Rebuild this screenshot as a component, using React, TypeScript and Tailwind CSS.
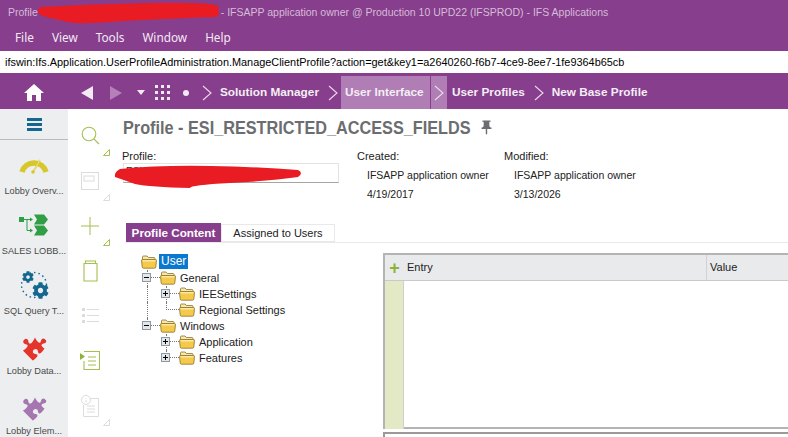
import React from "react";
import { FaCog, FaPuzzlePiece } from "react-icons/fa";
import { MdHome, MdPushPin } from "react-icons/md";

const Corner = ({ color = "#a4c04f" }: { color?: string }) => (
    <svg width="7" height="7" viewBox="0 0 7 7" className="absolute right-[-9px] bottom-[2px]">
        <path d="M6.5 0.5V6.5H0.5Z" fill="none" stroke={color} />
    </svg>
);

function ToolIcon({ children, corner }: { children: React.ReactNode; corner?: string }) {
    return (
        <div className="relative h-[45px] w-[22px] flex items-center justify-center">
            {children}
            {corner && <Corner color={corner} />}
        </div>
    );
}

const Chevron = ({ className = "" }: { className?: string }) => (
    <svg width="10" height="16" viewBox="0 0 10 16" className={className}>
        <path d="M1 1L9 8L1 15" fill="none" stroke="#ead9ec" strokeWidth="1.1" />
    </svg>
);

function Folder() {
    return (
        <svg width="16" height="14" viewBox="0 0 16 14" className="shrink-0">
            <path d="M1.5 3V1.8Q1.5 1 2.5 1H6L7.5 2.5H13Q14 2.5 14 3.5V5H1.5Z" fill="#f6e7a8" stroke="#8a7330" strokeWidth="0.8" />
            <path d="M0.5 5.5Q0.5 4.5 1.5 4.5H14.5Q15.5 4.5 15.5 5.5L14.8 12Q14.7 13.2 13.5 13.2H2.5Q1.3 13.2 1.2 12Z" fill="#f5c949" stroke="#8a7330" strokeWidth="0.8" />
            <path d="M1.8 5.8H14.2" stroke="#fdf1bd" strokeWidth="1.2" />
        </svg>
    );
}

function Expander({ open }: { open: boolean }) {
    return (
        <span className="absolute left-[-5px] top-[3px] w-[9px] h-[9px] border border-[#8e9aa3] bg-[#e4e7ea] flex items-center justify-center">
            <span className="relative w-[5px] h-px bg-black">
                {!open && <span className="absolute left-[2px] top-[-2px] w-px h-[5px] bg-black" />}
            </span>
        </span>
    );
}

interface TreeRowProps {
    label: string;
    guide?: boolean[];
    last?: boolean;
    expander?: "open" | "closed";
}

function TreeRow({ label, guide = [], last, expander }: TreeRowProps) {
    return (
        <div className="flex h-4 items-center">
            {guide.map((on, i) => (
                <div key={i} className={`w-[19px] h-4 shrink-0 ${on ? "border-l border-dotted border-[#777]" : ""}`} />
            ))}
            <div className="relative w-[13px] h-4 shrink-0">
                <div className="h-2 border-l border-b border-dotted border-[#777]" />
                {!last && <div className="h-2 border-l border-dotted border-[#777]" />}
                {expander && <Expander open={expander === "open"} />}
            </div>
            <Folder />
            <span className="ml-[4px] text-[11px] text-[#222] whitespace-nowrap">{label}</span>
        </div>
    );
}

function LobbyItem({ icon, label }: { icon: React.ReactNode; label: string }) {
    return (
        <div className="h-[60px] flex flex-col items-center">
            <div className="h-[38px] flex items-center justify-center">{icon}</div>
            <span className="text-[9.2px] text-[#4a4a4a] whitespace-nowrap leading-[14px]">{label}</span>
        </div>
    );
}

export default function App() {
    return (
        <div className="relative w-[788px] h-[437px] overflow-hidden bg-white font-['Liberation_Sans',sans-serif]">
            {/* window chrome */}
            <div className="h-[76px] bg-[#873e8d]">
                <div className="h-[25px] pl-2 flex items-center text-[10.5px] text-[#d5bcd8] whitespace-nowrap">
                    <span>Profile</span>
                    <span className="ml-[183px]">- IFSAPP application owner @ Production 10 UPD22 (IFSPROD) - IFS Applications</span>
                </div>
                <div className="h-[26px] pl-[15px] flex items-center gap-[18px] text-[11.8px] text-[#f3e9f4] font-['Noto_Sans',sans-serif]">
                    <span>File</span>
                    <span>View</span>
                    <span>Tools</span>
                    <span>Window</span>
                    <span>Help</span>
                </div>
                <div className="h-[22px] bg-white pl-[5px] flex items-center text-[10.9px] text-black whitespace-nowrap">
                    ifswin:Ifs.Application.UserProfileAdministration.ManageClientProfile?action=get&amp;key1=a2640260-f6b7-4ce9-8ee7-1fe9364b65cb
                </div>
            </div>

            {/* breadcrumb bar */}
            <div className="h-[33px] bg-[#873e8d] flex items-center text-[11.8px] font-bold text-[#f5eef6] whitespace-nowrap">
                <MdHome className="ml-[22px] text-white" size={24} />
                <svg width="12" height="14" viewBox="0 0 12 14" className="ml-[35px]"><path d="M12 0V14L0 7Z" fill="#f3eaf4" /></svg>
                <svg width="12" height="14" viewBox="0 0 12 14" className="ml-[17px]"><path d="M0 0V14L12 7Z" fill="#b57fb8" /></svg>
                <svg width="8" height="5" viewBox="0 0 8 5" className="ml-[15px]"><path d="M0 0H8L4 5Z" fill="#f3eaf4" /></svg>
                <div className="ml-[10px] grid grid-cols-3 gap-[3px]">
                    {[...Array(9)].map((_, i) => (
                        <span key={i} className="w-[3px] h-[3px] bg-[#f3eaf4]" />
                    ))}
                </div>
                <span className="ml-[13px] w-[6px] h-[6px] rounded-full bg-[#f3eaf4]" />
                <Chevron className="ml-[13px]" />
                <span className="ml-[8px]">Solution Manager</span>
                <Chevron className="ml-[9px]" />
                <div className="ml-[3px] h-full flex items-center bg-[#b07db5]">
                    <span className="px-1 w-[89px]">User Interface</span>
                    <div className="h-full w-[17px] border-l border-[#873e8d] flex items-center justify-center">
                        <Chevron />
                    </div>
                </div>
                <span className="ml-[5px]">User Profiles</span>
                <Chevron className="ml-[9px]" />
                <span className="ml-[8px]">New Base Profile</span>
            </div>

            <div className="flex">
                {/* lobby sidebar */}
                <div className="w-[68px] h-[328px] shrink-0 bg-[#eceef0]">
                    <div className="h-[31px] mx-0 border-b border-[#b9bcbf] flex items-center justify-center">
                        <div className="w-[15px] flex flex-col gap-[2px]">
                            <span className="h-[3px] bg-[#14688f]" />
                            <span className="h-[3px] bg-[#14688f]" />
                            <span className="h-[3px] bg-[#14688f]" />
                        </div>
                    </div>
                    <div className="pt-[6px]">
                        <LobbyItem
                            label="Lobby Overv..."
                            icon={
                                <svg width="30" height="20" viewBox="0 0 30 20">
                                    <path d="M3 17A12.5 12.5 0 0 1 27 17" fill="none" stroke="#d8c72a" strokeWidth="5.5" />
                                    <path d="M14 17L21 5" stroke="#d8c72a" strokeWidth="1.5" />
                                    <path d="M14 17L21 5" stroke="#fff" strokeWidth="0.5" />
                                    <circle cx="14" cy="17" r="1.8" fill="#d8c72a" />
                                </svg>
                            }
                        />
                        <LobbyItem
                            label="SALES LOBB..."
                            icon={
                                <svg width="30" height="22" viewBox="0 0 30 22">
                                    <rect x="0" y="3" width="5" height="5" fill="#2f9e44" />
                                    <path d="M5 5.5H13M8 5.5V16.5H13" fill="none" stroke="#2f9e44" strokeWidth="1" />
                                    <path d="M11 3.5L14 5.5L11 7.5ZM11 14.5L14 16.5L11 18.5Z" fill="#2f9e44" />
                                    <path d="M15 0.5H25L29 5.5L25 10.5H15L18 5.5ZM15 11.5H25L29 16.5L25 21.5H15L18 16.5Z" fill="#2f9e44" />
                                </svg>
                            }
                        />
                        <LobbyItem
                            label="SQL Query T..."
                            icon={
                                <div className="relative w-[29px] h-[29px]">
                                    <svg width="29" height="29" viewBox="0 0 29 29" className="absolute inset-0">
                                        <circle cx="14" cy="14" r="12.5" fill="none" stroke="#14688f" strokeWidth="1.4" strokeDasharray="1.5 3" />
                                    </svg>
                                    <FaCog className="absolute left-[2px] top-0 text-[#14688f]" size={12} />
                                    <FaCog className="absolute left-[12px] top-[11px] text-[#14688f]" size={17} />
                                </div>
                            }
                        />
                        <LobbyItem label="Lobby Data..." icon={<FaPuzzlePiece className="text-[#e5352b] -rotate-45" size={24} />} />
                        <LobbyItem label="Lobby Elem..." icon={<FaPuzzlePiece className="text-[#a676b0] -rotate-45" size={24} />} />
                    </div>
                </div>

                {/* action toolbar */}
                <div className="w-[55px] shrink-0 pt-[4px] pl-[11px]">
                    <ToolIcon corner="#a4c04f">
                        <svg width="19" height="19" viewBox="0 0 19 19"><circle cx="8" cy="8" r="6.8" fill="none" stroke="#a4c04f" strokeWidth="1.1" /><path d="M12.8 12.8L18 18" stroke="#a4c04f" strokeWidth="1.1" /></svg>
                    </ToolIcon>
                    <ToolIcon corner="#dcdcdc">
                        <svg width="18" height="18" viewBox="0 0 18 18"><rect x="0.5" y="0.5" width="17" height="17" fill="none" stroke="#dcdcdc" /><rect x="3" y="4" width="10" height="5" fill="none" stroke="#dcdcdc" /></svg>
                    </ToolIcon>
                    <ToolIcon corner="#a4c04f">
                        <svg width="18" height="18" viewBox="0 0 18 18"><path d="M9 0V18M0 9H18" stroke="#a4c04f" strokeWidth="1" /></svg>
                    </ToolIcon>
                    <ToolIcon>
                        <svg width="15" height="22" viewBox="0 0 15 22"><path d="M1 3.5H14V21H1ZM2.5 1H12.5V3.5H2.5Z" fill="none" stroke="#a4c04f" strokeWidth="1.1" /></svg>
                    </ToolIcon>
                    <ToolIcon>
                        <svg width="17" height="15" viewBox="0 0 17 15"><path d="M0 0H3V3H0ZM0 6H3V9H0ZM0 12H3V15H0Z" fill="#dcdcdc" /><path d="M5 1.5H17M5 7.5H17M5 13.5H17" stroke="#dcdcdc" /></svg>
                    </ToolIcon>
                    <ToolIcon>
                        <svg width="20" height="19" viewBox="0 0 20 19"><path d="M4 0.5H19.5V18.5H4V10" fill="none" stroke="#a4c04f" strokeWidth="1.1" /><path d="M8 6H16M8 10H16M8 14H16" stroke="#a4c04f" /><path d="M0 2V9L5 5.5Z" fill="#8fb339" /></svg>
                    </ToolIcon>
                    <ToolIcon corner="#dcdcdc">
                        <svg width="18" height="22" viewBox="0 0 18 22"><circle cx="5" cy="5" r="4.5" fill="#fff" stroke="#dcdcdc" /><path d="M5 3V3.8M5 5V7.5" stroke="#dcdcdc" /><path d="M9 3.5H17.5V21.5H2.5V10" fill="none" stroke="#dcdcdc" /><path d="M6 11H14M6 14H14M6 17H14" stroke="#dcdcdc" /></svg>
                    </ToolIcon>
                </div>

                {/* page content */}
                <div className="flex-1 min-w-0">
                    <div className="h-[37px] flex items-center">
                        <h1 className="text-[19px] leading-none font-bold text-[#6b6d70] whitespace-nowrap scale-x-[0.855] origin-left w-[355px]">
                            Profile - ESI_RESTRICTED_ACCESS_FIELDS
                        </h1>
                        <MdPushPin className="text-[#6b6d70]" size={17} />
                    </div>
                    <div className="flex text-[10.5px] text-[#222] h-[78px]">
                        <div className="w-[235px] shrink-0 -ml-px">
                            <div className="text-[11px] leading-[14px] pt-[3px]">Profile:</div>
                            <div className="ml-px w-[216px] h-[20px] border border-[#e3e3e3] border-b-[#a5a5a5] pl-[2px] text-[10px] leading-[16px] overflow-hidden">ESI</div>
                        </div>
                        <div className="w-[147px] shrink-0">
                            <div className="text-[11px] leading-[14px] pt-[3px]">Created:</div>
                            <div className="pl-[10px] pt-[5px] leading-[14px]">IFSAPP application owner</div>
                            <div className="pl-[10px] pt-[5px] leading-[14px]">4/19/2017</div>
                        </div>
                        <div className="whitespace-nowrap">
                            <div className="text-[11px] leading-[14px] pt-[3px]">Modified:</div>
                            <div className="pl-[10px] pt-[5px] leading-[14px]">IFSAPP application owner</div>
                            <div className="pl-[10px] pt-[5px] leading-[14px]">3/13/2026</div>
                        </div>
                    </div>

                    {/* tabs */}
                    <div className="flex h-[19px] ml-[3px] border-b border-[#e9e9e9] items-end">
                        <div className="w-[95px] h-[19px] bg-[#873e8d] text-white text-[11.7px] font-bold flex items-center justify-center">Profile Content</div>
                        <div className="w-[114px] h-[18px] border border-[#e9e9e9] text-[11px] text-[#222] flex items-center justify-center">Assigned to Users</div>
                    </div>

                    <div className="flex pt-[10px]">
                        {/* tree */}
                        <div className="w-[260px] shrink-0 pl-[18px]">
                            <div className="flex items-center h-[17px]">
                                <Folder />
                                <span className="ml-[2px] px-[2px] h-[15px] leading-[15px] bg-[#0b78d0] text-white text-[12px]">User</span>
                            </div>
                            <div className="ml-[6px]">
                                <TreeRow label="General" expander="open" />
                                <TreeRow label="IEESettings" guide={[true]} expander="closed" />
                                <TreeRow label="Regional Settings" guide={[true]} last />
                                <TreeRow label="Windows" expander="open" last />
                                <TreeRow label="Application" guide={[false]} expander="closed" />
                                <TreeRow label="Features" guide={[false]} expander="closed" last />
                            </div>
                        </div>

                        {/* entry grid */}
                        <div className="flex-1 min-w-0">
                            <div className="h-[176px] border-2 border-r-0 border-[#b4b4b4]">
                                <div className="h-[26px] bg-[#e9eaec] border-b border-[#c9c9c9] flex items-center text-[11px] text-[#222]">
                                    <div className="w-[19px] text-center text-[#8fb339] text-[18px] font-bold leading-none">+</div>
                                    <div className="w-[303px] pl-[3px] h-full flex items-center border-r border-[#d2d2d2]">Entry</div>
                                    <div className="pl-[3px]">Value</div>
                                </div>
                                <div className="w-[19px] h-[148px] bg-[#e3e9c4] border-r border-[#cfcfcf]" />
                            </div>
                            <div className="mt-[3px] h-2 border-t-2 border-l-2 border-[#9a9a9a]" />
                        </div>
                    </div>
                </div>
            </div>

            {/* hand-drawn redactions on top of the screenshot */}
            <svg width="788" height="200" className="absolute left-0 top-0 pointer-events-none">
                <path d="M40 7Q90 4 150 3T218 6Q220 14 217 17Q150 19 110 22T60 20Q42 17 38 13Q38 9 40 7Z" fill="#e91c23" />
                <path d="M120 169Q160 165 210 166T298 170Q304 173 298 177Q270 181 230 183T190 188Q150 187 135 184Q124 180 115 177Q114 172 120 169Z" fill="#e91c23" />
            </svg>
        </div>
    );
}
